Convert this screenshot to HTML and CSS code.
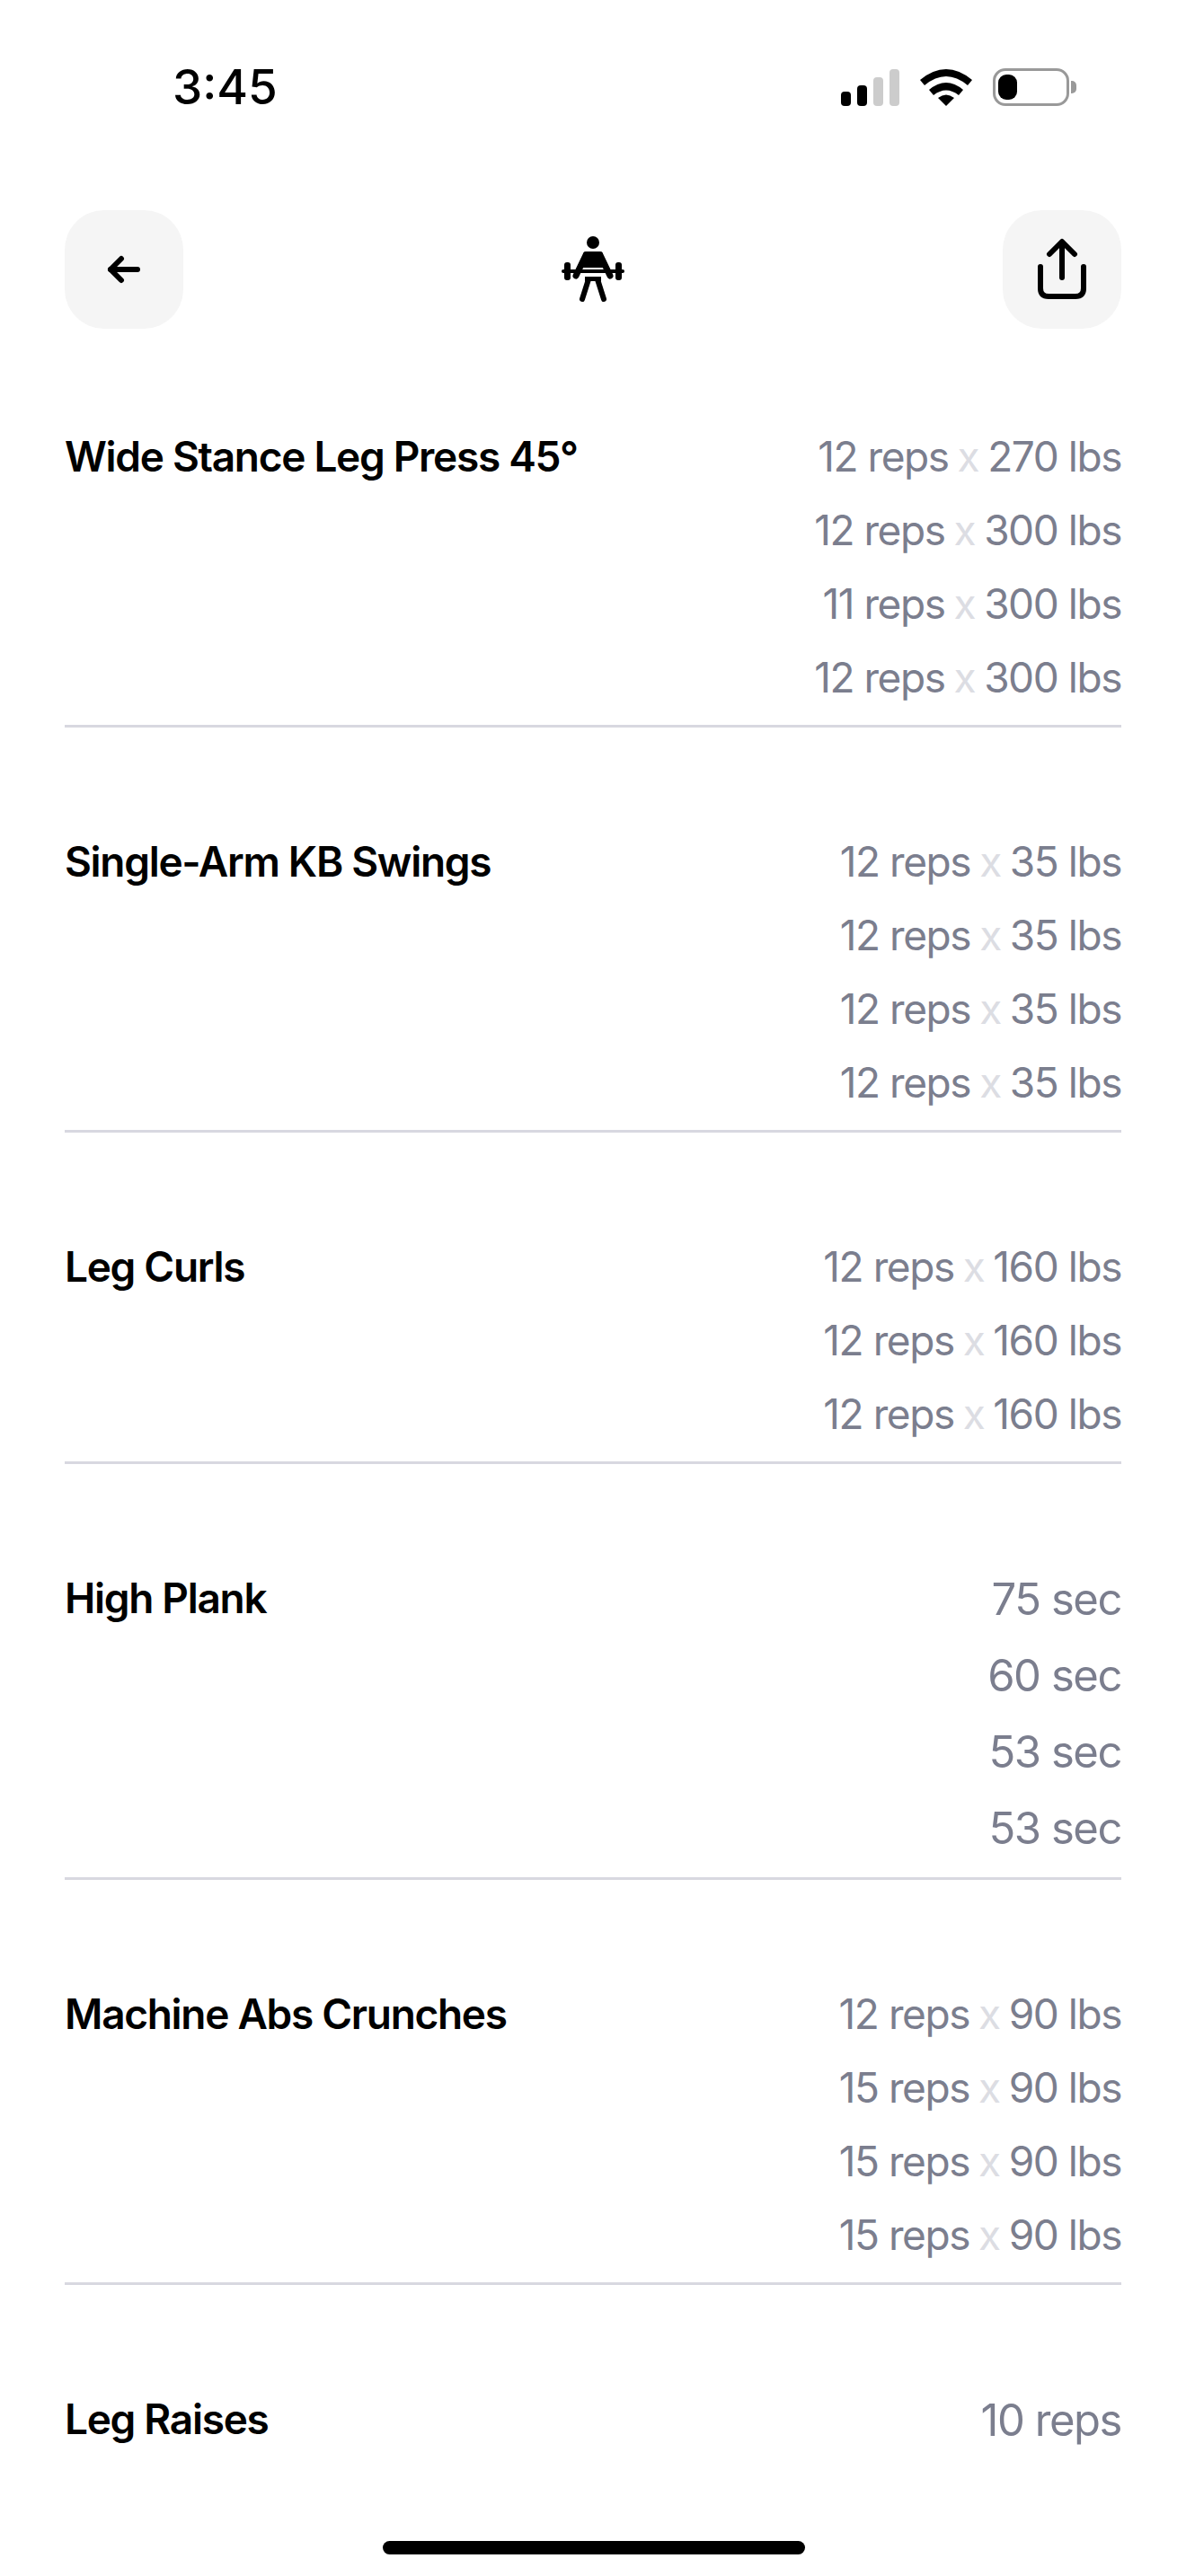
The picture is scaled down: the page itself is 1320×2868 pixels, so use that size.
FILE: index.html
```html
<!DOCTYPE html>
<html lang="en">
<head>
    <meta charset="UTF-8">
    <meta name="viewport" content="width=device-width, initial-scale=1.0">
    <title>Workout Summary</title>
    <link rel="stylesheet" href="styles.css">
</head>
<body>
    <!-- Status bar -->
    <div class="status-bar">
        <div class="status-time">3:45</div>
        <div class="status-icons">
            <svg class="icon-signal" width="65" height="41" viewBox="0 0 65 41">
                <rect x="0" y="25" width="11" height="16" rx="4" fill="#000"/>
                <rect x="18" y="18" width="11" height="23" rx="4" fill="#000"/>
                <rect x="36" y="9" width="11" height="32" rx="4" fill="#ccc"/>
                <rect x="54" y="0" width="11" height="41" rx="4" fill="#ccc"/>
            </svg>
            <svg class="icon-wifi" width="58" height="42" viewBox="0 0 58 42">
                <path d="M0 13 Q29 -11 58 13 L53 19 Q29 -1 5 19 Z" fill="#000"/>
                <path d="M10 24 Q29 8 48 24 L43 30 Q29 19 15 30 Z" fill="#000"/>
                <path d="M29 42 L20 33 Q29 26 38 33 Z" fill="#000"/>
            </svg>
            <div class="battery">
                <div class="battery-body"><div class="battery-level"></div></div>
                <div class="battery-cap"></div>
            </div>
        </div>
    </div>

    <!-- Header -->
    <div class="header">
        <button class="icon-btn">
            <svg width="38" height="32" viewBox="0 0 38 32" fill="none" stroke="#000" stroke-width="6" stroke-linecap="round" stroke-linejoin="round">
                <path d="M34 16 H4"/>
                <path d="M16 4 L4 16 L16 28"/>
            </svg>
        </button>
        <svg class="header-icon" width="72" height="74" viewBox="0 0 72 74">
            <circle cx="36" cy="7" r="7" fill="#000"/>
            <path d="M28 17 H44 Q46 17 47 19 V35 H25 V19 Q26 17 28 17 Z" fill="#000"/>
            <path d="M28 21 L17 44 M44 21 L55 44" fill="none" stroke="#000" stroke-width="7" stroke-linecap="round"/>
            <rect x="1" y="37" width="70" height="4" rx="2" fill="#000"/>
            <rect x="4" y="29" width="7" height="20" rx="3" fill="#000"/>
            <rect x="61" y="29" width="7" height="20" rx="3" fill="#000"/>
            <rect x="27" y="45" width="18" height="5" fill="#000"/>
            <path d="M31 48 L24 70 M41 48 L48 70" fill="none" stroke="#000" stroke-width="6" stroke-linecap="round"/>
        </svg>
        <button class="icon-btn">
            <svg width="58" height="70" viewBox="0 0 58 70" fill="none" stroke="#000" stroke-width="6" stroke-linecap="round" stroke-linejoin="round">
                <path d="M29 44 V5"/>
                <path d="M15 18 L29 4 L43 18"/>
                <path d="M5 32 V56 Q5 65 14 65 H44 Q53 65 53 56 V32"/>
            </svg>
        </button>
    </div>

    <!-- Exercise list -->
    <div class="exercise-list">
        <div class="exercise">
            <div class="exercise-name">Wide Stance Leg Press 45°</div>
            <div class="sets">
                <div class="set">12 reps <span class="times">x</span> 270 lbs</div>
                <div class="set">12 reps <span class="times">x</span> 300 lbs</div>
                <div class="set">11 reps <span class="times">x</span> 300 lbs</div>
                <div class="set">12 reps <span class="times">x</span> 300 lbs</div>
            </div>
        </div>
        <div class="exercise">
            <div class="exercise-name">Single-Arm KB Swings</div>
            <div class="sets">
                <div class="set">12 reps <span class="times">x</span> 35 lbs</div>
                <div class="set">12 reps <span class="times">x</span> 35 lbs</div>
                <div class="set">12 reps <span class="times">x</span> 35 lbs</div>
                <div class="set">12 reps <span class="times">x</span> 35 lbs</div>
            </div>
        </div>
        <div class="exercise">
            <div class="exercise-name">Leg Curls</div>
            <div class="sets">
                <div class="set">12 reps <span class="times">x</span> 160 lbs</div>
                <div class="set">12 reps <span class="times">x</span> 160 lbs</div>
                <div class="set">12 reps <span class="times">x</span> 160 lbs</div>
            </div>
        </div>
        <div class="exercise">
            <div class="exercise-name">High Plank</div>
            <div class="sets timed">
                <div class="set">75 sec</div>
                <div class="set">60 sec</div>
                <div class="set">53 sec</div>
                <div class="set">53 sec</div>
            </div>
        </div>
        <div class="exercise">
            <div class="exercise-name">Machine Abs Crunches</div>
            <div class="sets">
                <div class="set">12 reps <span class="times">x</span> 90 lbs</div>
                <div class="set">15 reps <span class="times">x</span> 90 lbs</div>
                <div class="set">15 reps <span class="times">x</span> 90 lbs</div>
                <div class="set">15 reps <span class="times">x</span> 90 lbs</div>
            </div>
        </div>
        <div class="exercise last">
            <div class="exercise-name">Leg Raises</div>
            <div class="sets timed">
                <div class="set">10 reps</div>
            </div>
        </div>
    </div>

    <div class="home-indicator"></div>
</body>
</html>
```

FILE: styles.css
```css
body {
    font-family: Inter, 'Liberation Sans', sans-serif;
    margin: 0;
    padding: 0;
    background-color: #fff;
    color: #000;
    height: 2868px;
    overflow: hidden;
    position: relative;
}

/* Status bar */
.status-bar {
    height: 194px;
    padding: 0 122px 0 192px;
    display: flex;
    justify-content: space-between;
    align-items: center;
    box-sizing: border-box;
}

.status-time {
    font-size: 53px;
    font-weight: 500;
    letter-spacing: 0;
}

.status-icons {
    display: flex;
    align-items: center;
    gap: 23px;
}

.battery {
    display: flex;
    align-items: center;
    gap: 2px;
}

.battery-body {
    width: 85px;
    height: 42px;
    box-sizing: border-box;
    border: 3px solid #999;
    border-radius: 14px;
    padding: 4px 3px;
}

.battery-level {
    width: 21px;
    height: 100%;
    background-color: #000;
    border-radius: 9px;
}

.battery-cap {
    width: 6px;
    height: 14px;
    background-color: #999;
    border-radius: 0 5px 5px 0;
}

/* Header */
.header {
    height: 132px;
    margin-top: 40px;
    padding: 0 72px;
    display: flex;
    justify-content: space-between;
    align-items: center;
}

.icon-btn {
    width: 132px;
    height: 132px;
    border: none;
    border-radius: 44px;
    padding: 0;
    background-color: #f5f5f5;
    display: flex;
    justify-content: center;
    align-items: center;
}

/* Exercise list */
.exercise-list {
    padding: 0 72px;
}

.exercise {
    display: flex;
    justify-content: space-between;
    align-items: flex-start;
    padding: 108px 0 12px;
    border-bottom: 3px solid #d8d8e0;
}

.exercise:first-child {
    padding-top: 101px;
}

.exercise.last {
    border-bottom: none;
}

.exercise-name {
    font-size: 46px;
    font-weight: 600;
    line-height: 82px;
    letter-spacing: -1.3px;
}

.sets {
    text-align: right;
    color: #7b7e8e;
    font-size: 46px;
    letter-spacing: -1.45px;
}

.set {
    height: 82px;
    line-height: 82px;
}

.times {
    color: #dcdde3;
    margin: 0 -1.5px;
}

.sets.timed {
    font-size: 49px;
}

.sets.timed .set {
    height: 85px;
    line-height: 85px;
}

.home-indicator {
    position: absolute;
    left: 426px;
    bottom: 24px;
    width: 470px;
    height: 15px;
    background-color: #000;
    border-radius: 8px;
}
```
